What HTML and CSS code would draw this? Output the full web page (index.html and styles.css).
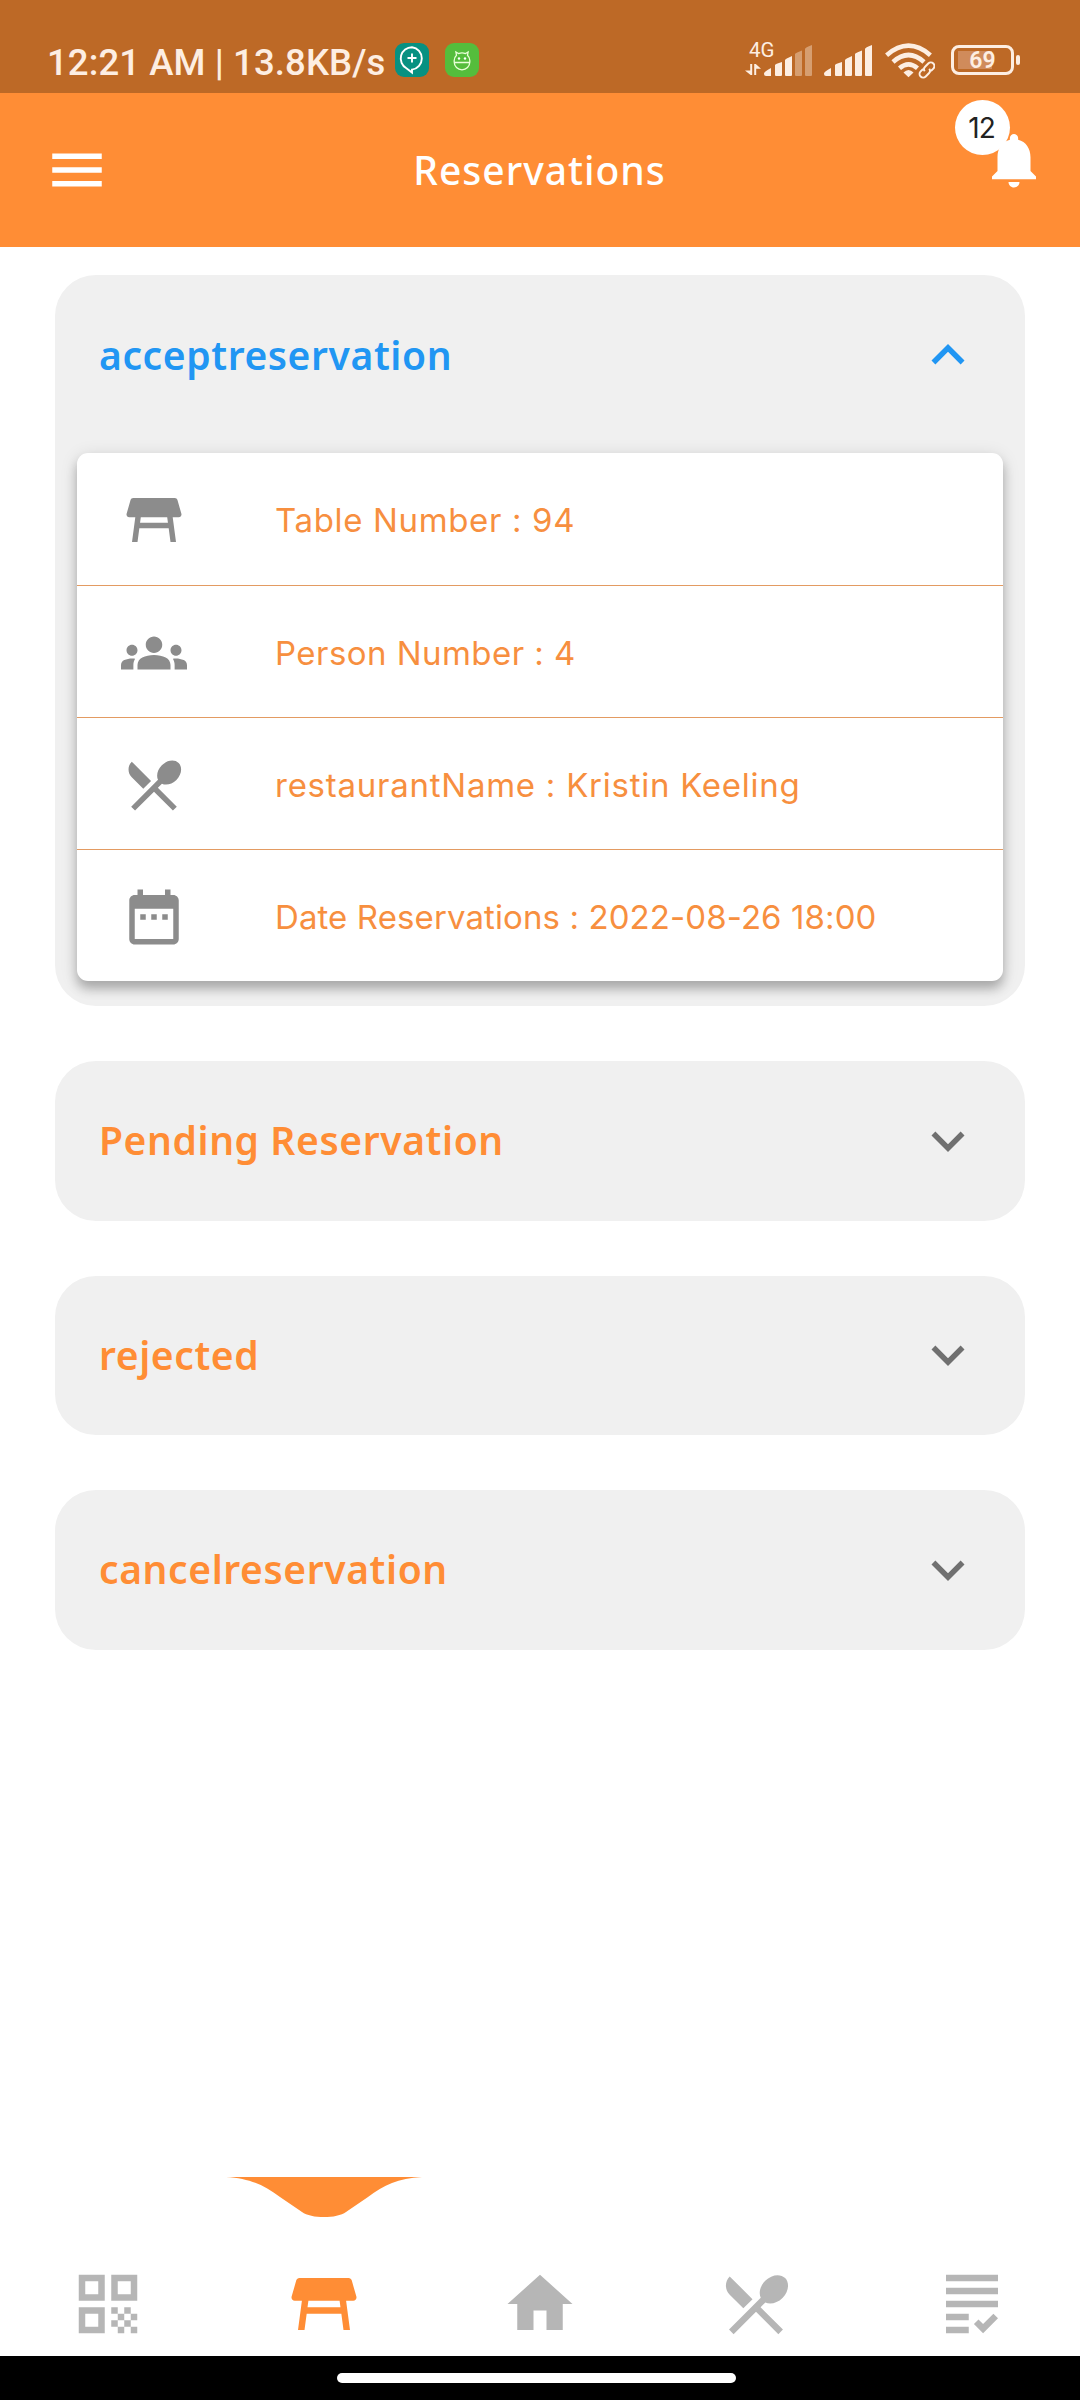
FILE: index.html
```html
<!DOCTYPE html>
<html lang="en">
<head>
<meta charset="utf-8">
<title>Reservations</title>
<link rel="stylesheet" href="styles.css">
</head>
<body>
<div class="screen">
  <div class="status-bar">
    <span class="status-text">12:21 AM | 13.8KB/s</span>
    <svg class="app-icon" viewBox="0 0 34 34">
      <rect width="34" height="34" rx="9" fill="#079181"/>
      <path d="M17 4.2a11.3 11.3 0 0 0-5.6 21.1l5.6 4.2v-2.9a11.3 11.3 0 0 0 0-22.4z" fill="none" stroke="#fff" stroke-width="1.9"/>
      <path d="M17 10.5v9M12.5 15h9" stroke="#fff" stroke-width="1.9"/>
    </svg>
    <svg class="app-icon second" viewBox="0 0 34 34">
      <rect width="34" height="34" rx="9" fill="#55bd3c"/>
      <path d="M9 19.5h16M9.2 17.5c0-2.500 1-4 2.300-5.200l-.6-3.300 2.600 1.600c2.200-1 4.800-1 7 0l2.600-1.600-.6 3.300c1.300 1.200 2.300 2.700 2.300 5.200v1.500a7.800 7.800 0 0 1-15.600 0z" fill="none" stroke="#eaffd8" stroke-width="1.300"/>
      <circle cx="14" cy="15.500" r="1.200" fill="#fff"/><circle cx="20" cy="15.500" r="1.200" fill="#fff"/>
    </svg>
    <div class="status-right">
      <div class="network">
        <span class="network-type">4G</span>
        <svg class="data-arrows" viewBox="0 0 16 12"><path d="M5.200 0H7.200V11H5.600L0 6.400H5.200zM9.200 0H10.800L16 4.800H11.200V11H9.200z" fill="currentColor"/></svg>
      </div>
      <svg class="signal" viewBox="0 0 48 40">
        <path d="M0 33.500Q0 31.500 7 28V36H2Q0 36 0 34zM11 25Q11 24 18 22V35Q18 36 17 36H12Q11 36 11 35zM21 20Q21 19 28 16V35Q28 36 27 36H22Q21 36 21 35z" fill="currentColor"/>
        <path d="M31 14Q31 13 38 10.500V35Q38 36 37 36H32Q31 36 31 35zM41 9Q41 7.500 48 5V35Q48 36 47 36H42Q41 36 41 35z" fill="currentColor" opacity=".4"/>
      </svg>
      <svg class="signal full" viewBox="0 0 48 40">
        <path d="M0 33.500Q0 31.500 7 28V36H2Q0 36 0 34zM11 25Q11 24 18 22V35Q18 36 17 36H12Q11 36 11 35zM21 20Q21 19 28 16V35Q28 36 27 36H22Q21 36 21 35zM31 14Q31 13 38 10.500V35Q38 36 37 36H32Q31 36 31 35zM41 9Q41 7.500 48 5V35Q48 36 47 36H42Q41 36 41 35z" fill="currentColor"/>
      </svg>
      <svg class="wifi" viewBox="0 0 50 40">
        <g fill="none" stroke="currentColor" stroke-width="4.600">
          <path d="M1.600 15.200Q23.500-3.800 45.400 15.200"/><path d="M8 22Q23.500 8 39 22"/><path d="M14.500 28.300Q23.500 20.500 32.500 28.300"/>
        </g>
        <path d="M18.500 32.500Q23.500 27.500 28.500 32.500L23.500 37.200z" fill="currentColor"/>
        <g fill="none" transform="rotate(-45 42 30)">
          <path d="M32 24.500H52V35.500H32z" fill="#bd6926"/>
          <path d="M40 26.500H36.500a3.600 3.600 0 0 0 0 7.200H41a3.600 3.600 0 0 0 3.500-3M44 33.500h3.500a3.600 3.600 0 0 0 0-7.200H43a3.600 3.600 0 0 0-3.500 3" stroke="currentColor" stroke-width="2"/>
        </g>
      </svg>
      <div class="battery"><span class="battery-level">69</span></div>
      <span class="battery-tip"></span>
    </div>
  </div>

  <header class="app-bar">
    <svg class="icon menu" viewBox="0 0 24 24"><path d="M3 18h18v-2H3v2zm0-5h18v-2H3v2zm0-7v2h18V6H3z"/></svg>
    <h1 class="title">Reservations</h1>
    <div class="bell">
      <svg class="icon" viewBox="0 0 24 24"><path d="M12 22c1.100 0 2-.9 2-2h-4c0 1.100.89 2 2 2zm6-6v-5c0-3.070-1.640-5.640-4.500-6.320V4c0-.83-.67-1.500-1.500-1.500s-1.500.67-1.500 1.500v.68C7.630 5.360 6 7.920 6 11v5l-2 2v1h16v-1l-2-2z"/></svg>
      <span class="badge">12</span>
    </div>
  </header>

  <main class="list">
    <section class="panel open">
      <div class="panel-head">
        <h2>acceptreservation</h2>
        <svg class="icon" viewBox="0 0 24 24"><path d="M12 8l-6 6 1.410 1.410L12 10.830l4.590 4.580L18 14z"/></svg>
      </div>
      <div class="details">
        <div class="row">
          <svg class="icon" viewBox="0 0 24 24"><path d="M21.960 9.730l-1.430-5C20.410 4.300 20.020 4 19.570 4H4.430c-.45 0-.84.3-.96.73l-1.430 5C1.860 10.360 2.340 11 3 11h2.200L4 20h2l.67-5h10.670l.66 5h2l-1.200-9H21c.66 0 1.140-.64.96-1.270zM6.930 13l.27-2h9.600l.27 2H6.930z"/></svg>
          <span class="text-table">Table Number : 94</span>
        </div>
        <div class="row">
          <svg class="icon" viewBox="0 0 24 24"><path d="M4 13c1.100 0 2-.9 2-2s-.9-2-2-2-2 .9-2 2 .9 2 2 2zm1.130 1.100C4.760 14.040 4.390 14 4 14c-.99 0-1.930.21-2.780.58C.48 14.900 0 15.620 0 16.430V18h4.500v-1.610c0-.83.23-1.610.63-2.290zM20 13c1.100 0 2-.9 2-2s-.9-2-2-2-2 .9-2 2 .9 2 2 2zm4 3.430c0-.81-.48-1.530-1.220-1.850C21.930 14.210 20.990 14 20 14c-.39 0-.76.04-1.130.1.400.68.630 1.460.630 2.290V18H24v-1.570zM16.240 13.650c-1.170-.52-2.610-.9-4.240-.9s-3.070.39-4.240.9C6.680 14.130 6 15.210 6 16.390V18h12v-1.610c0-1.180-.68-2.260-1.760-2.740zM9 9c0 1.660 1.340 3 3 3s3-1.340 3-3-1.340-3-3-3-3 1.340-3 3z"/></svg>
          <span class="text-person">Person Number : 4</span>
        </div>
        <div class="row">
          <svg class="icon" viewBox="0 0 24 24"><path d="M8.100 13.340l2.830-2.830L3.910 3.500c-1.560 1.560-1.560 4.090 0 5.660l4.190 4.180zm6.780-1.810c1.530.71 3.680.21 5.270-1.380 1.910-1.910 2.280-4.650.81-6.120-1.460-1.460-4.200-1.100-6.120.81-1.590 1.590-2.090 3.740-1.380 5.270L3.700 19.870l1.410 1.410L12 14.410l6.880 6.880 1.410-1.410L13.410 13l1.470-1.470z"/></svg>
          <span class="text-restaurant">restaurantName : Kristin Keeling</span>
        </div>
        <div class="row">
          <svg class="icon" viewBox="0 0 24 24"><path d="M9 11H7v2h2v-2zm4 0h-2v2h2v-2zm4 0h-2v2h2v-2zm2-7h-1V2h-2v2H8V2H6v2H5c-1.110 0-1.990.9-1.990 2L3 20c0 1.100.89 2 2 2h14c1.100 0 2-.9 2-2V6c0-1.100-.9-2-2-2zm0 16H5V9h14v11z"/></svg>
          <span class="text-date">Date Reservations : 2022-08-26 18:00</span>
        </div>
      </div>
    </section>
    <section class="panel">
      <div class="panel-head">
        <h2>Pending Reservation</h2>
        <svg class="icon" viewBox="0 0 24 24"><path d="M16.590 8.590L12 13.170 7.410 8.590 6 10l6 6 6-6z"/></svg>
      </div>
    </section>
    <section class="panel">
      <div class="panel-head">
        <h2>rejected</h2>
        <svg class="icon" viewBox="0 0 24 24"><path d="M16.590 8.590L12 13.170 7.410 8.590 6 10l6 6 6-6z"/></svg>
      </div>
    </section>
    <section class="panel">
      <div class="panel-head">
        <h2>cancelreservation</h2>
        <svg class="icon" viewBox="0 0 24 24"><path d="M16.590 8.590L12 13.170 7.410 8.590 6 10l6 6 6-6z"/></svg>
      </div>
    </section>
  </main>

  <nav class="bottom-nav">
    <div class="tab">
      <svg class="nav-icon" viewBox="0 0 24 24"><path fill-rule="evenodd" d="M3 11h8V3H3v8zm2-6h4v4H5V5zM3 21h8v-8H3v8zm2-6h4v4H5v-4zM13 3v8h8V3h-8zm6 6h-4V5h4v4zM19 19h2v2h-2zM13 13h2v2h-2zM15 15h2v2h-2zM13 17h2v2h-2zM15 19h2v2h-2zM17 17h2v2h-2zM17 13h2v2h-2zM19 15h2v2h-2z"/></svg>
    </div>
    <div class="tab active">
      <svg class="marker" viewBox="0 0 196 42"><path d="M0 0H196C172 1.500 158 8 142 20L120 35C111 41.800 85 41.800 76 35L54 20C38 8 24 1.500 0 0z"/></svg>
      <svg class="nav-icon" viewBox="0 0 24 24"><path d="M21.960 9.730l-1.430-5C20.410 4.300 20.020 4 19.570 4H4.430c-.45 0-.84.3-.96.73l-1.430 5C1.860 10.360 2.340 11 3 11h2.200L4 20h2l.67-5h10.670l.66 5h2l-1.200-9H21c.66 0 1.140-.64.96-1.270zM6.930 13l.27-2h9.600l.27 2H6.930z"/></svg>
    </div>
    <div class="tab">
      <svg class="nav-icon" viewBox="0 0 24 24"><path d="M10 20v-6h4v6h5v-8h3L12 3 2 12h3v8z"/></svg>
    </div>
    <div class="tab">
      <svg class="nav-icon" viewBox="0 0 24 24"><path d="M8.100 13.340l2.830-2.830L3.910 3.500c-1.560 1.560-1.560 4.090 0 5.660l4.190 4.180zm6.780-1.810c1.530.71 3.680.21 5.270-1.380 1.910-1.910 2.280-4.650.81-6.120-1.460-1.460-4.200-1.100-6.120.81-1.590 1.590-2.090 3.740-1.380 5.270L3.700 19.870l1.410 1.410L12 14.410l6.880 6.880 1.410-1.410L13.410 13l1.470-1.470z"/></svg>
    </div>
    <div class="tab">
      <svg class="nav-icon" viewBox="0 0 24 24"><path d="M4 7h16v2H4V7zm0 6h16v-2H4v2zm0 4h7v-2H4v2zm0 4h7v-2H4v2zm11.410-2.830L14 16.750l-1.410 1.410L15.410 21 20 16.420 18.580 15l-3.170 3.170zM4 3v2h16V3H4z"/></svg>
    </div>
  </nav>
  <div class="gesture-bar"><span class="handle"></span></div>
</div>
</body>
</html>
```
FILE: styles.css
```css
* { box-sizing: border-box; }

body {
  margin: 0;
  background: #fff;
  font-family: Inter, "Liberation Sans", sans-serif;
}

svg { display: block; flex: none; }

h1, h2 { margin: 0; font-family: "Noto Sans", sans-serif; white-space: nowrap; }

.screen {
  display: flex;
  flex-direction: column;
  width: 1080px;
  height: 2400px;
}

.icon { width: 66px; height: 66px; fill: currentColor; }

/* Status bar */
.status-bar {
  display: flex;
  align-items: flex-start;
  height: 93px;
  padding: 40px 60px 0 47px;
  background: #bd6926;
  color: #fdeee2;
}

.status-text {
  width: 348px;
  font: 500 36.500px/45px Roboto, sans-serif;
  letter-spacing: .1px;
  white-space: nowrap;
}

.app-icon { width: 34px; height: 34px; margin-top: 3px; }
.app-icon.second { margin-left: 16px; }

.status-right {
  display: flex;
  height: 40px;
  margin-left: auto;
}

.network { display: flex; flex-direction: column; width: 19px; }
.network-type { padding-left: 4px; font: 20.500px/20px Roboto, sans-serif; white-space: nowrap; }
.data-arrows { width: 16px; height: 12px; margin-top: 4px; }
.signal { width: 48px; height: 40px; }
.signal.full { margin-left: 12px; }
.wifi { width: 50px; height: 40px; margin-left: 13px; }

.battery {
  display: flex;
  align-items: center;
  justify-content: center;
  width: 63px;
  height: 30px;
  margin: 5px 0 0 16px;
  border: 3px solid currentColor;
  border-radius: 8px;
  background: linear-gradient(#d08b5b, #d08b5b) 4px 3px / 34px 18px no-repeat;
}
.battery-level { padding-top: 2px; font: 600 23px/24px Roboto, sans-serif; }
.battery-tip {
  width: 4px;
  height: 10px;
  margin: 15px 0 0 2px;
  border-radius: 2px;
  background: currentColor;
}

/* App bar */
.app-bar {
  display: flex;
  align-items: center;
  justify-content: space-between;
  height: 154px;
  padding: 0 33px 0 44px;
  background: #ff8d35;
  color: #fff;
}
.title { margin-right: 12px; padding-bottom: 2px; font-size: 39px; font-weight: 500; letter-spacing: 1px; }
.bell { position: relative; margin-bottom: 21px; }
.badge {
  position: absolute;
  top: -27px;
  left: -26px;
  width: 55px;
  height: 55px;
  padding-right: 2px;
  border-radius: 50%;
  background: #fff;
  color: #222;
  font-size: 28px;
  line-height: 56px;
  text-align: center;
  letter-spacing: -1px;
}

/* Accordion */
.list {
  display: flex;
  flex: 1;
  flex-direction: column;
  gap: 55px;
  padding: 28px 55px 0;
}
.panel {
  overflow: hidden;
  border-radius: 41px;
  background: #f0f0f0;
  color: #ff8d35;
}
.panel-head {
  display: flex;
  align-items: center;
  justify-content: space-between;
  height: 159.500px;
  padding: 0 44px;
}
.panel-head h2 { padding-bottom: 2px; font-size: 39px; font-weight: 600; letter-spacing: .6px; }
.panel-head .icon { color: #707070; }
.open { padding-bottom: 25px; color: #2196f3; }
.open .panel-head { height: 178px; padding-bottom: 18px; }
.open .panel-head .icon { color: #2196f3; }

.details {
  margin: 0 22px;
  border-radius: 11px;
  background: #fff;
  box-shadow: 0 8px 11px rgba(0, 0, 0, .24), 0 3px 18px rgba(0, 0, 0, .12);
}
.row {
  display: flex;
  align-items: center;
  gap: 88px;
  height: 132px;
  padding: 2px 0 0 44px;
  color: #f78f3f;
  font-size: 33px;
  font-feature-settings: "calt" 0;
  white-space: nowrap;
}
.row + .row { border-top: 1px solid #e39b62; }
.row .icon { color: #8c8c8c; }
.text-table { letter-spacing: .65px; }
.text-person { letter-spacing: .45px; }
.text-restaurant { letter-spacing: .75px; }
.text-date { letter-spacing: .1px; }

/* Bottom navigation */
.bottom-nav { display: flex; height: 179px; }
.tab {
  display: flex;
  flex: 1;
  flex-direction: column;
  align-items: center;
  justify-content: flex-end;
  padding-bottom: 13.500px;
  color: #b6b6b6;
}
.tab.active { justify-content: space-between; color: #ff8d35; }
.marker { width: 196px; height: 42px; fill: currentColor; }
.nav-icon { width: 78px; height: 78px; fill: currentColor; }

.gesture-bar {
  display: flex;
  justify-content: center;
  height: 44px;
  padding: 17px 7px 0 0;
  background: #000;
}
.handle { width: 399px; height: 10px; border-radius: 5px; background: #fff; }
```
